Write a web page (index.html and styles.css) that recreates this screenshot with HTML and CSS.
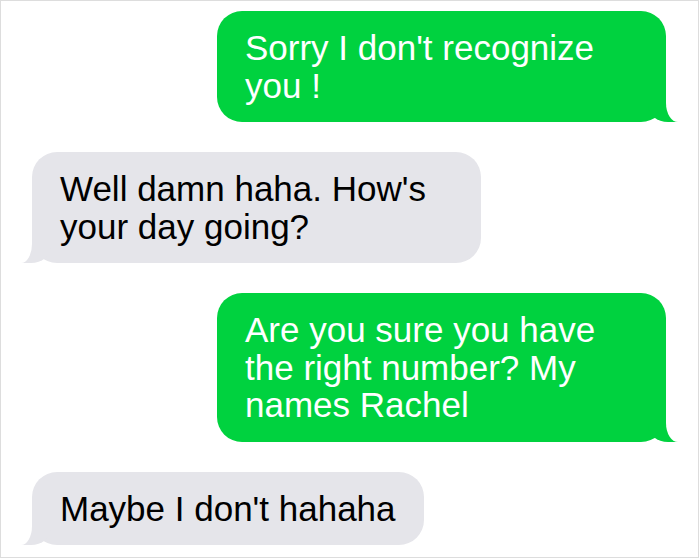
FILE: index.html
```html
<!DOCTYPE html>
<html lang="en">
<head>
    <meta charset="UTF-8">
    <meta name="viewport" content="width=device-width, initial-scale=1.0">
    <title>Messages</title>
    <link rel="stylesheet" href="styles.css">
</head>
<body>
    <div class="chat">
        <div class="bubble sent">Sorry I don't recognize you !</div>
        <div class="bubble received">Well damn haha. How's your day going?</div>
        <div class="bubble sent">Are you sure you have the right number? My names Rachel</div>
        <div class="bubble received">Maybe I don't hahaha</div>
    </div>
</body>
</html>
```

FILE: styles.css
```css
body {
    margin: 0;
    padding: 0;
    background: #fff;
    font-family: "Liberation Sans", Arial, sans-serif;
}
.chat {
    width: 699px;
    height: 558px;
    box-sizing: border-box;
    border: 1px solid #dddddd;
    padding: 10px 32px 0 31px;
    display: flex;
    flex-direction: column;
    gap: 30px;
    overflow: hidden;
}
.bubble {
    position: relative;
    box-sizing: border-box;
    max-width: 449px;
    padding: 18px 28px;
    border-radius: 25px;
    font-size: 35px;
    line-height: 37.5px;
}
.sent {
    align-self: flex-end;
    background: #00d23f;
    color: #fff;
}
.received {
    align-self: flex-start;
    background: #e5e5ea;
    color: #000;
}

/* tails */
.bubble::before,
.bubble::after {
    content: "";
    position: absolute;
    bottom: 0;
}
.sent::before {
    right: -12px;
    width: 30px;
    height: 26px;
    background: #00d23f;
    border-bottom-left-radius: 20px 16px;
}
.sent::after {
    right: -18px;
    width: 18px;
    height: 28px;
    background: #fff;
    border-bottom-left-radius: 12px 19px;
}
.received::before {
    left: -11px;
    width: 30px;
    height: 26px;
    background: #e5e5ea;
    border-bottom-right-radius: 20px 16px;
}
.received::after {
    left: -18px;
    width: 18px;
    height: 28px;
    background: #fff;
    border-bottom-right-radius: 11px 19px;
}
```
